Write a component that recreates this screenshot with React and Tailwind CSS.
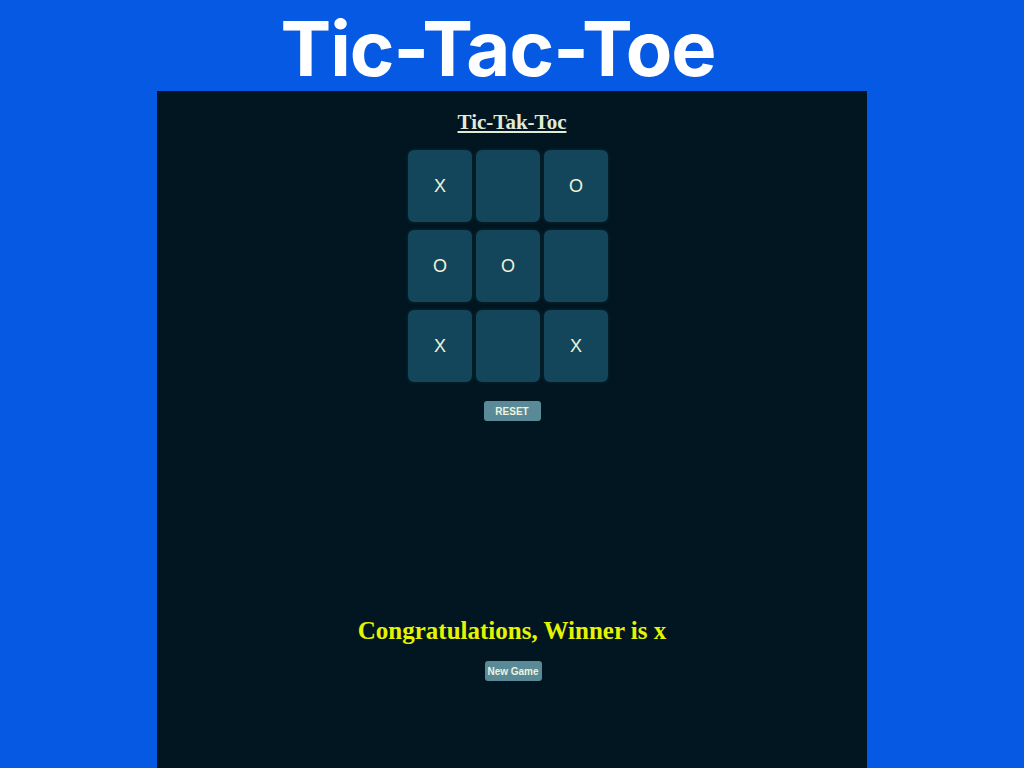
import React, { useState } from "react";

const start = ["X", "", "O", "O", "O", "", "X", "", "X"];

function Cell({ value }) {
  return (
    <div className="w-[64px] h-[72px] mx-[2px] my-[4px] rounded-[6px] bg-[#13465a] shadow-[0_0_4px_#0b2a36] flex items-center justify-center text-[18px] text-[#eef3dc] font-['Liberation_Sans',sans-serif]">
      {value}
    </div>
  );
}

export default function App() {
  const [board] = useState(start);
  return (
    <div className="w-full h-[768px] bg-[#0559e2] flex flex-col items-center overflow-hidden">
      <h1 className="h-[91px] pt-[2px] mr-[28px] text-white font-['Inter',sans-serif] font-bold text-[76px] leading-[92px] tracking-[-1px]">
        Tic-Tac-Toe
      </h1>
      <div className="w-[710px] flex-1 bg-[#011620] flex flex-col items-center">
        <h2 className="mt-[19px] text-[21px] leading-[24px] font-bold underline text-[#e3ead8] font-['Liberation_Serif',serif]">
          Tic-Tak-Toc
        </h2>
        <div className="mt-[12px] mr-[8px] grid grid-cols-3">
          {board.map((v, i) => (
            <Cell key={i} value={v} />
          ))}
        </div>
        <button className="mt-[15px] w-[57px] h-[20px] rounded-[3px] bg-[#5a8997] text-[10px] font-bold text-[#eef3dc] font-['Liberation_Sans',sans-serif]">
          RESET
        </button>
        <p className="mt-[196px] text-[25px] leading-[28px] font-bold text-[#e5f400] font-['Liberation_Serif',serif]">
          Congratulations, Winner is x
        </p>
        <button className="mt-[16px] ml-[2px] w-[57px] h-[20px] rounded-[3px] bg-[#5a8997] text-[10px] font-bold text-[#eef3dc] font-['Liberation_Sans',sans-serif]">
          New Game
        </button>
      </div>
    </div>
  );
}
